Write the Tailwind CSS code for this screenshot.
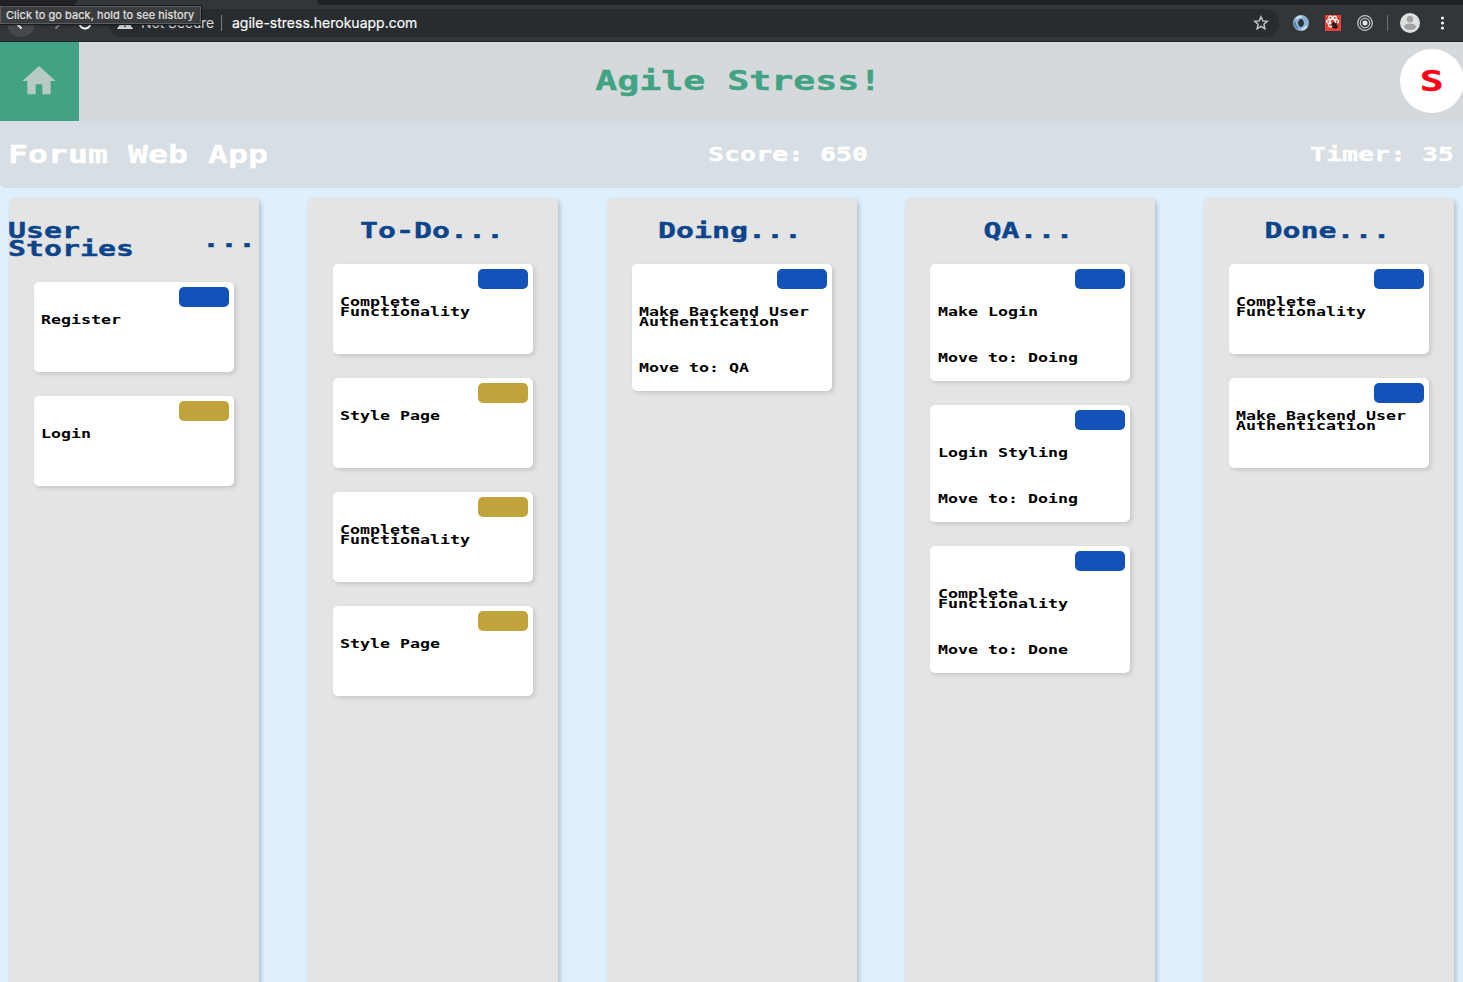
<!DOCTYPE html>
<html lang="en">
<head>
<meta charset="utf-8">
<title>Agile Stress!</title>
<script src="https://cdn.jsdelivr.net/npm/@tailwindcss/browser@4"></script>
</head>
<body class="h-[982px] w-[1463px] overflow-hidden bg-[#def0fd] font-['DejaVu_Sans_Mono',monospace] font-bold">
<div class="flex h-full flex-col">

  <!-- Browser chrome -->
  <div class="relative flex h-[42px] shrink-0 flex-col border-b border-[#25282a] bg-[#323639] font-['Inter',sans-serif] font-normal">
    <div class="flex h-[5px] justify-between">
      <div class="w-[77px] rounded-br-[5px] bg-[#202125]"></div>
      <div class="w-[1146px] rounded-bl-[5px] bg-[#202125]"></div>
    </div>
    <div class="flex flex-1 items-center">
      <div class="ml-[7px] flex size-7 items-center justify-center rounded-full bg-[#45494c]">
        <svg class="size-4" viewBox="0 0 16 16" fill="none" stroke="#f1f3f4" stroke-width="2"><path d="M14 8H3M8.500 2.500L3 8l5.500 5.500"/></svg>
      </div>
      <svg class="ml-[13px] size-4" viewBox="0 0 16 16" fill="none" stroke="#7d8184" stroke-width="2"><path d="M2 8h11M7.500 2.500L13 8l-5.500 5.500"/></svg>
      <svg class="ml-[13px] size-4" viewBox="0 0 16 16" fill="none" stroke="#f1f3f4" stroke-width="2"><path d="M13.500 8A5.500 5.500 0 1 1 11.900 4.100"/><path d="M14 1v5H9z" fill="#f1f3f4" stroke="none"/></svg>
      <div class="ml-[15px] flex h-7 w-[1171px] items-center rounded-full bg-[#282c2f]">
        <svg class="ml-[9px] size-4" viewBox="0 0 16 16" fill="#d5d7d9"><path fill-rule="evenodd" d="M8 1L16 14H0zM7.300 5.500v4h1.400v-4zM7.300 10.800v1.400h1.400v-1.400z"/></svg>
        <span class="ml-2 w-[74px] whitespace-nowrap text-[14px] leading-5 tracking-[-0.1px] text-[#d8dadb]">Not Secure</span>
        <span class="ml-[6px] h-4 w-px bg-[#777a7d]"></span>
        <span class="ml-[10px] whitespace-nowrap text-[14px] leading-5 text-[#f8f9fa] [-webkit-text-stroke:0.2px]">agile-stress.herokuapp.com</span>
        <svg class="mr-[10px] ml-auto size-4" viewBox="0 0 16 16" fill="none" stroke="#c7cacc" stroke-width="1.400"><path d="M8 1.800l1.800 4.100 4.500.4-3.400 3 1 4.400L8 11.400l-3.900 2.300 1-4.400-3.400-3 4.500-.4z"/></svg>
      </div>
      <svg class="ml-[14px] size-4" viewBox="0 0 16 16" fill="none"><circle cx="8" cy="8" r="5.500" stroke="#8db1d2" stroke-width="5"/><path d="M3 4a6.500 6.500 0 0 1 6-2.500M13.500 11a6.500 6.500 0 0 1-5 3.500" stroke="#d0e2f0" stroke-width="2"/><path d="M2 7a6 6 0 0 0 3 6" stroke="#557fa8" stroke-width="2"/><ellipse cx="8" cy="8" rx="2.200" ry="4" fill="#25323d"/></svg>
      <svg class="ml-4 size-4" viewBox="0 0 16 16" fill="none"><path d="M0 0h16v16H0z" fill="#e3443a"/><g stroke="#fff" stroke-width="1.100"><ellipse cx="7.500" cy="6.500" rx="6" ry="2.400"/><ellipse cx="7.500" cy="6.500" rx="6" ry="2.400" transform="rotate(60 7.500 6.500)"/><ellipse cx="7.500" cy="6.500" rx="6" ry="2.400" transform="rotate(120 7.500 6.500)"/></g><ellipse cx="9.500" cy="10.500" rx="2.400" ry="3.400" fill="#2b1715" transform="rotate(-35 9.500 10.500)"/><path d="M6 9l7 3M7 13l5-5M9 7l2 7" stroke="#2b1715"/></svg>
      <svg class="ml-4 size-4" viewBox="0 0 16 16" fill="none" stroke="#c3c5c6" stroke-width="1.300"><circle cx="8" cy="8" r="7.300"/><circle cx="8" cy="8" r="4.700"/><circle cx="8" cy="8" r="2.500" fill="#e4e5e6" stroke="none"/></svg>
      <span class="ml-[14px] h-4 w-px bg-[#6c7073]"></span>
      <svg class="ml-3 size-5" viewBox="0 0 20 20"><circle cx="10" cy="10" r="10" fill="#dedfe0"/><circle cx="10" cy="6.200" r="3.200" fill="#9fa1a3"/><ellipse cx="10" cy="13.800" rx="6" ry="3.200" fill="#9fa1a3"/></svg>
      <svg class="ml-[20px] h-4 w-[5px]" viewBox="0 0 5 16" fill="#f1f3f4"><circle cx="2.500" cy="3" r="1.600"/><circle cx="2.500" cy="8" r="1.600"/><circle cx="2.500" cy="13" r="1.600"/></svg>
    </div>
    <div class="absolute top-[5px] left-0 flex h-5 w-[202px] items-center border border-l-0 border-[#17191a] bg-[#3b3c3e] pl-[6px] whitespace-nowrap shadow-[inset_0_0_0_1px_#5c5d5f,0_1px_2px_#0004] text-[11px] leading-4 tracking-[0.060px] text-[#e2e3e3] [-webkit-text-stroke:0.2px]">Click to go back, hold to see history</div>
  </div>

  <!-- App header -->
  <header class="flex h-[79px] shrink-0 items-center justify-between bg-[#d5d9db]">
    <div class="flex size-[79px] items-center justify-center bg-[#41a284] pr-px pb-[2px]">
      <svg class="size-10" viewBox="0 0 24 24" fill="#b7cbc4"><path d="M10 20v-6h4v6h5v-8h3L12 3 2 12h3v8z"/></svg>
    </div>
    <h1 class="-translate-x-[1px] -translate-y-[1px] scale-x-[1.384] whitespace-nowrap text-[26.400px] leading-[26px] text-[#41a284] [-webkit-text-stroke:0.4px]">Agile Stress!</h1>
    <div class="-mr-px mb-[2px] flex size-16 items-center justify-center rounded-full bg-white">
      <span class="scale-x-[1.384] text-[28.800px] leading-[28px] text-[#ff0015] [-webkit-text-stroke:0.3px]">S</span>
    </div>
  </header>

  <!-- Project bar -->
  <div class="flex h-[67px] shrink-0 items-center justify-between rounded-b-[5px] bg-[#d7dee4] pr-[9px] pl-2 text-white [-webkit-text-stroke:0.3px]">
    <div class="w-[260px]"><h2 class="w-max origin-left scale-x-[1.384] text-[24px] leading-6">Forum Web App</h2></div>
    <div class="w-[160px]"><p class="w-max origin-left -translate-x-[1px] scale-x-[1.384] text-[19.200px] leading-5">Score: 650</p></div>
    <div class="w-[144px]"><p class="w-max origin-left scale-x-[1.384] text-[19.200px] leading-5">Timer: 35</p></div>
  </div>

  <!-- Board -->
  <main class="mt-[10px] flex h-[800px] shrink-0 justify-between px-[9px] text-[12px] leading-[10px] text-black">

    <section class="w-[250px] rounded-[5px] bg-[#e4e4e4] shadow-[2px_2px_4px_#0003]">
      <div class="flex h-[84px] items-center justify-between text-[21.600px] leading-[18px] text-[#0d458c] [-webkit-text-stroke:0.4px]">
        <h3 class="-ml-px origin-left scale-x-[1.384]">User<br>Stories</h3>
        <span class="origin-right -translate-x-[3px] scale-x-[1.384]">...</span>
      </div>
      <div class="flex flex-col items-center gap-6">
        <article class="h-[90px] w-[200px] rounded-[5px] bg-white pt-[5px] pl-[7px] shadow-[2px_2px_4px_#0002]">
          <div class="ml-auto mr-[5px] h-5 w-[50px] rounded-[5px] bg-[#1352b9]"></div>
          <p class="mt-2 w-max origin-left scale-x-[1.384]">Register</p>
        </article>
        <article class="h-[90px] w-[200px] rounded-[5px] bg-white pt-[5px] pl-[7px] shadow-[2px_2px_4px_#0002]">
          <div class="ml-auto mr-[5px] h-5 w-[50px] rounded-[5px] bg-[#c0a33a]"></div>
          <p class="mt-2 w-max origin-left scale-x-[1.384]">Login</p>
        </article>
      </div>
    </section>

    <section class="w-[250px] rounded-[5px] bg-[#e4e4e4] shadow-[2px_2px_4px_#0003]">
      <div class="flex h-[66px] items-center justify-center text-[21.600px] leading-[18px] text-[#0d458c] [-webkit-text-stroke:0.4px]">
        <h3 class="-translate-x-px scale-x-[1.384]">To-Do...</h3>
      </div>
      <div class="flex flex-col items-center gap-6">
        <article class="h-[90px] w-[200px] rounded-[5px] bg-white pt-[5px] pl-[7px] shadow-[2px_2px_4px_#0002]">
          <div class="ml-auto mr-[5px] h-5 w-[50px] rounded-[5px] bg-[#1352b9]"></div>
          <p class="mt-2 w-max origin-left scale-x-[1.384]">Complete<br>Functionality</p>
        </article>
        <article class="h-[90px] w-[200px] rounded-[5px] bg-white pt-[5px] pl-[7px] shadow-[2px_2px_4px_#0002]">
          <div class="ml-auto mr-[5px] h-5 w-[50px] rounded-[5px] bg-[#c0a33a]"></div>
          <p class="mt-2 w-max origin-left scale-x-[1.384]">Style Page</p>
        </article>
        <article class="h-[90px] w-[200px] rounded-[5px] bg-white pt-[5px] pl-[7px] shadow-[2px_2px_4px_#0002]">
          <div class="ml-auto mr-[5px] h-5 w-[50px] rounded-[5px] bg-[#c0a33a]"></div>
          <p class="mt-2 w-max origin-left scale-x-[1.384]">Complete<br>Functionality</p>
        </article>
        <article class="h-[90px] w-[200px] rounded-[5px] bg-white pt-[5px] pl-[7px] shadow-[2px_2px_4px_#0002]">
          <div class="ml-auto mr-[5px] h-5 w-[50px] rounded-[5px] bg-[#c0a33a]"></div>
          <p class="mt-2 w-max origin-left scale-x-[1.384]">Style Page</p>
        </article>
      </div>
    </section>

    <section class="w-[250px] rounded-[5px] bg-[#e4e4e4] shadow-[2px_2px_4px_#0003]">
      <div class="flex h-[66px] items-center justify-center text-[21.600px] leading-[18px] text-[#0d458c] [-webkit-text-stroke:0.4px]">
        <h3 class="-translate-x-px scale-x-[1.384]">Doing...</h3>
      </div>
      <div class="flex flex-col items-center gap-6">
        <article class="w-[200px] rounded-[5px] bg-white pt-[5px] pb-[18px] pl-[7px] shadow-[2px_2px_4px_#0002]">
          <div class="ml-auto mr-[5px] h-5 w-[50px] rounded-[5px] bg-[#1352b9]"></div>
          <p class="mt-[18px] w-max origin-left scale-x-[1.384]">Make Backend User<br>Authentication</p>
          <p class="mt-9 w-max origin-left scale-x-[1.384]">Move to: QA</p>
        </article>
      </div>
    </section>

    <section class="w-[250px] rounded-[5px] bg-[#e4e4e4] shadow-[2px_2px_4px_#0003]">
      <div class="flex h-[66px] items-center justify-center text-[21.600px] leading-[18px] text-[#0d458c] [-webkit-text-stroke:0.4px]">
        <h3 class="-translate-x-[2px] scale-x-[1.384]">QA...</h3>
      </div>
      <div class="flex flex-col items-center gap-6">
        <article class="w-[200px] rounded-[5px] bg-white pt-[5px] pb-[18px] pl-[7.500px] shadow-[2px_2px_4px_#0002]">
          <div class="ml-auto mr-[5px] h-5 w-[50px] rounded-[5px] bg-[#1352b9]"></div>
          <p class="mt-[18px] w-max origin-left scale-x-[1.384]">Make Login</p>
          <p class="mt-9 w-max origin-left scale-x-[1.384]">Move to: Doing</p>
        </article>
        <article class="w-[200px] rounded-[5px] bg-white pt-[5px] pb-[18px] pl-[7.500px] shadow-[2px_2px_4px_#0002]">
          <div class="ml-auto mr-[5px] h-5 w-[50px] rounded-[5px] bg-[#1352b9]"></div>
          <p class="mt-[18px] w-max origin-left scale-x-[1.384]">Login Styling</p>
          <p class="mt-9 w-max origin-left scale-x-[1.384]">Move to: Doing</p>
        </article>
        <article class="w-[200px] rounded-[5px] bg-white pt-[5px] pb-[18px] pl-[7.500px] shadow-[2px_2px_4px_#0002]">
          <div class="ml-auto mr-[5px] h-5 w-[50px] rounded-[5px] bg-[#1352b9]"></div>
          <p class="mt-[18px] w-max origin-left scale-x-[1.384]">Complete<br>Functionality</p>
          <p class="mt-9 w-max origin-left scale-x-[1.384]">Move to: Done</p>
        </article>
      </div>
    </section>

    <section class="w-[250px] rounded-[5px] bg-[#e4e4e4] shadow-[2px_2px_4px_#0003]">
      <div class="flex h-[66px] items-center justify-center text-[21.600px] leading-[18px] text-[#0d458c] [-webkit-text-stroke:0.4px]">
        <h3 class="-translate-x-px scale-x-[1.384]">Done...</h3>
      </div>
      <div class="flex flex-col items-center gap-6">
        <article class="h-[90px] w-[200px] rounded-[5px] bg-white pt-[5px] pl-[7px] shadow-[2px_2px_4px_#0002]">
          <div class="ml-auto mr-[5px] h-5 w-[50px] rounded-[5px] bg-[#1352b9]"></div>
          <p class="mt-2 w-max origin-left scale-x-[1.384]">Complete<br>Functionality</p>
        </article>
        <article class="h-[90px] w-[200px] rounded-[5px] bg-white pt-[5px] pl-[7px] shadow-[2px_2px_4px_#0002]">
          <div class="ml-auto mr-[5px] h-5 w-[50px] rounded-[5px] bg-[#1352b9]"></div>
          <p class="mt-2 w-max origin-left scale-x-[1.384]">Make Backend User<br>Authentication</p>
        </article>
      </div>
    </section>
  </main>
</div>
</body>
</html>
